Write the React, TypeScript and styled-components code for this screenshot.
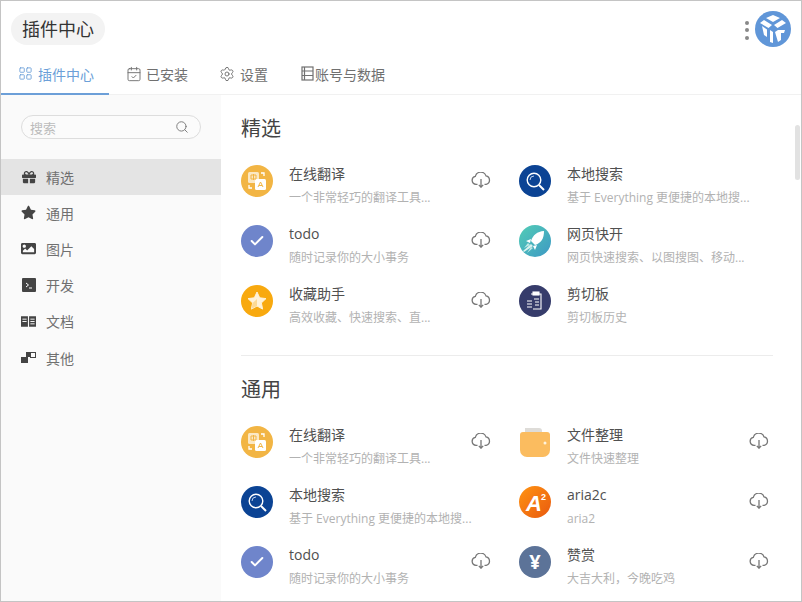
import { ReactNode } from "react";
import styled, { createGlobalStyle } from "styled-components";
import { CalendarCheck, Check, LayoutGrid, Search, Settings } from "lucide-react";
import { FaGift, FaImage, FaStar } from "react-icons/fa";

const GlobalStyle = createGlobalStyle`
  html, body {
    margin: 0;
    padding: 0;
    background: #fff;
    font-family: "Open Sans", "Noto Sans CJK SC", sans-serif;
    overflow: hidden;
  }
  * { box-sizing: border-box; }
`;

const Window = styled.div`
  width: 802px;
  height: 602px;
  border: 1px solid #c4c4c4;
  display: flex;
  flex-direction: column;
  overflow: hidden;
  background: #fff;
`;

const TitleBar = styled.header`
  height: 54px;
  flex: none;
  display: flex;
  align-items: flex-start;
  justify-content: space-between;
  padding: 12px 10px 0 10px;
`;

const TitlePill = styled.div`
  height: 32px;
  width: 94px;
  border-radius: 16px;
  background: #f3f3f3;
  color: #333;
  font-size: 18px;
  line-height: 32px;
  text-align: center;
`;

const TitleActions = styled.div`
  display: flex;
  align-items: center;
  margin-top: -2px;
`;

const MenuDots = styled.div`
  display: flex;
  flex-direction: column;
  gap: 3.5px;
  margin: 2px 6px 0 0;
`;

const MenuDot = styled.span`
  width: 4px;
  height: 4px;
  border-radius: 50%;
  background: #888;
`;

const Tabs = styled.nav`
  height: 40px;
  flex: none;
  display: flex;
  border-bottom: 1px solid #f1f1f1;
`;

const Tab = styled.div<{ $active?: boolean; $width: number; $inset: number; $gap: number }>`
  width: ${(p) => p.$width}px;
  height: 40px;
  display: flex;
  align-items: center;
  gap: ${(p) => p.$gap}px;
  padding: 0 0 1px ${(p) => p.$inset}px;
  font-size: 14px;
  color: ${(p) => (p.$active ? "#6c9fd8" : "#707070")};
  border-bottom: 2px solid ${(p) => (p.$active ? "#6c9fd8" : "transparent")};
`;

const Body = styled.div`
  flex: 1;
  min-height: 0;
  display: flex;
`;

const Sidebar = styled.aside`
  width: 220px;
  flex: none;
  background: #fafafa;
  padding-top: 20px;
`;

const SearchBox = styled.div`
  width: 180px;
  height: 24px;
  margin: 0 0 20px 20px;
  padding: 0 11px 0 8px;
  border: 1px solid #ddd;
  border-radius: 12px;
  display: flex;
  align-items: center;
  justify-content: space-between;
  font-size: 13px;
  color: #bbb;
  background: #fbfbfb;

  svg {
    color: #777;
  }
`;

const NavItem = styled.div<{ $active?: boolean }>`
  height: 36.2px;
  display: flex;
  align-items: center;
  gap: 10px;
  padding: 0 0 1px 20px;
  font-size: 14px;
  color: #707070;
  background: ${(p) => (p.$active ? "#e4e4e4" : "transparent")};
`;

const NavIcon = styled.span`
  width: 15px;
  height: 15px;
  display: flex;
  align-items: center;
  justify-content: center;
  color: #444;
`;

const Main = styled.main`
  position: relative;
  flex: 1;
  min-width: 0;
  padding: 0 28px 0 20px;
  overflow: hidden;
`;

const ScrollThumb = styled.div`
  position: absolute;
  top: 30px;
  right: 1px;
  width: 5px;
  height: 55px;
  border-radius: 3px;
  background: #e2e2e2;
`;

const SectionTitle = styled.h2`
  margin: 0;
  height: 56px;
  padding-top: 19px;
  font-size: 20px;
  line-height: 30px;
  font-weight: 400;
  color: #444;
`;

const Divider = styled.hr`
  margin: 24px 0 0;
  border: none;
  border-top: 1px solid #ececec;
`;

const PluginGrid = styled.div`
  display: grid;
  grid-template-columns: 278px 253px;
  grid-auto-rows: 60px;
`;

const PluginRow = styled.div`
  display: flex;
  align-items: center;
  height: 60px;
`;

const PluginBadge = styled.div<{ $bg: string }>`
  width: 32px;
  height: 32px;
  flex: none;
  border-radius: 50%;
  background: ${(p) => p.$bg};
  display: flex;
  align-items: center;
  justify-content: center;
  color: #fff;
`;

const PluginText = styled.div`
  width: 182px;
  margin: 8px 0 0 16px;
  flex: none;
  display: flex;
  flex-direction: column;
  gap: 5px;
`;

const PluginName = styled.div`
  font-size: 14px;
  line-height: 20px;
  color: #505050;
`;

const PluginDesc = styled.div`
  font-size: 12px;
  line-height: 18px;
  color: #b2b2b2;
  white-space: nowrap;
`;

const InstallButton = styled.div`
  width: 20px;
  height: 16px;
  margin-top: -3px;
  color: #777;
  display: flex;
`;

const CloudIcon = () => (
  <svg width="20" height="16" viewBox="0 0 20 16" fill="none" stroke="currentColor" strokeWidth="1.300">
    <path d="M6.500 12.300H5a4 4 0 0 1-.7-7.900A5.600 5.600 0 0 1 15 3.900a4.300 4.300 0 0 1 .2 8.400h-1.700" />
    <path d="M10 7v8M7.800 12.900 10 15.200l2.200-2.300" />
  </svg>
);

// Ruled sheet used on the accounts tab
const LedgerIcon = () => (
  <svg width="13" height="15" viewBox="0 0 13 15" fill="none" stroke="currentColor" strokeWidth="1.200">
    <rect x="1" y="1" width="11" height="13" />
    <path d="M1 5h11M1 9.500h11M3.500 1v13" />
  </svg>
);

const TerminalIcon = () => (
  <svg width="14" height="14" viewBox="0 0 14 14">
    <rect width="14" height="14" rx="1" fill="currentColor" />
    <path d="M4 5l2.500 2L4 9M7 10h3" stroke="#fff" strokeWidth="1" fill="none" />
  </svg>
);

const BookIcon = () => (
  <svg width="16" height="13" viewBox="0 0 16 13">
    <path d="M0 1h7.400v11H0zM8.600 1H16v11H8.600z" fill="currentColor" />
    <path d="M1.500 4h4.500M1.500 6.500h4.500M10 4h4.500M10 6.500h4.500M10 9h4.500" stroke="#fff" strokeWidth="1" />
  </svg>
);

const BlocksIcon = () => (
  <svg width="15" height="13" viewBox="0 0 15 13">
    <rect x="0" y="6" width="7" height="6" fill="currentColor" />
    <rect x="5" y="1" width="5" height="5" fill="currentColor" />
    <rect x="9.500" y="1.500" width="5" height="5" fill="#fafafa" stroke="currentColor" />
  </svg>
);

const AppLogo = () => (
  <svg width="36" height="36" viewBox="0 0 36 36">
    <circle cx="18" cy="18" r="18" fill="#6096d8" />
    <path d="M5 12l4-3 8 5-3.500 3zM31 12l-4-3-8 5 3.500 3zM11 7l7-3 7 3-7 4z" fill="#fff" />
    <path d="M7 15l5 3.500V26l-3-2zM15 19l3 2v11l-3-1zM20 21l3-2h7l-1 3h-3v7l-3 2z" fill="#fff" />
  </svg>
);

const TranslateArt = () => (
  <svg width="20" height="20" viewBox="0 0 20 20">
    <rect x="1" y="1" width="11" height="11" rx="1.500" fill="#fbe8c4" />
    <rect x="8" y="8" width="11" height="11" rx="1.500" fill="#fff" />
    <path d="M4 4h5v4H4zM6.500 3v6" stroke="#f2b544" strokeWidth="1" fill="none" />
    <path d="M11 16l2.500-5 2.500 5M12 14.500h3" stroke="#f2b544" strokeWidth="1" fill="none" />
    <path d="M14 2l3 0 0 3M2 14l0 3 3 0" stroke="#fff" strokeWidth="1.300" fill="none" />
  </svg>
);

const LensArt = () => (
  <svg width="22" height="22" viewBox="0 0 22 22" fill="none">
    <circle cx="10" cy="10" r="6.800" stroke="#fff" strokeWidth="1.400" />
    <path d="M15 15l5 5" stroke="#fff" strokeWidth="2" />
    <path d="M6 10a4 4 0 0 1 4-4" stroke="#bcd0ec" strokeWidth="1" />
  </svg>
);

const RocketArt = () => (
  <svg width="32" height="32" viewBox="0 0 32 32">
    <path d="M25 6c-7 .5-11 4-13 10l4 4c6-2 9-6 9-14z" fill="#fff" />
    <path d="M12 14l-5 2 4 2zM18 20l-2 5-2-4z" fill="#fff" />
    <path d="M12 19l2 2-9 6-1-1z" fill="#d9f2ef" />
    <path d="M9 18l2 2-6 3zM14 23l-2-1-4 6z" fill="#bfe9e4" />
  </svg>
);

const ClipboardArt = () => (
  <svg width="20" height="22" viewBox="0 0 20 22" fill="none" stroke="#fff" strokeWidth="1.100">
    <path d="M6 4h10v15H8" />
    <rect x="8" y="2" width="6" height="3" fill="#fff" />
    <path d="M9 9h5M10 12h4M10 15h4" />
    <path d="M2 11h5M2 14h5M2 17h5" />
  </svg>
);

const WalletArt = () => (
  <svg width="32" height="32" viewBox="0 0 32 32">
    <path d="M6 2h14a3 3 0 0 1 3 3v2H6z" fill="#dedcd8" />
    <path d="M1 9a3 3 0 0 1 3-3h24a3 3 0 0 1 3 3v15a7 7 0 0 1-7 7H8a7 7 0 0 1-7-7z" fill="#fbbc5f" />
    <circle cx="26" cy="17" r="1.500" fill="#fff3dc" />
  </svg>
);

const AriaArt = () => (
  <svg width="32" height="32" viewBox="0 0 32 32">
    <defs>
      <linearGradient id="ariaFill" x1="0" y1="0" x2="1" y2="1">
        <stop offset="0" stopColor="#ff9412" />
        <stop offset="1" stopColor="#e9590f" />
      </linearGradient>
    </defs>
    <circle cx="16" cy="16" r="16" fill="url(#ariaFill)" />
    <text x="7" y="25" fontSize="22" fontWeight="700" fontStyle="italic" fill="#fff" fontFamily="Liberation Sans, sans-serif">A</text>
    <text x="22" y="14" fontSize="9" fontWeight="700" fill="#fff" fontFamily="Liberation Sans, sans-serif">2</text>
  </svg>
);

const StarArt = () => (
  <svg width="22" height="22" viewBox="0 0 22 22">
    <path
      d="M11 2l2.700 5.800 6.300.8-4.600 4.300 1.200 6.200L11 16l-5.600 3.100 1.200-6.200L2 8.600l6.300-.8z"
      fill="#fff2d8"
      stroke="#fff2d8"
      strokeLinejoin="round"
    />
    <path d="M5.400 19.100 11 16V9l-4.400 3.900z" fill="#fcd995" />
  </svg>
);

const YenArt = styled.span`
  color: #fff;
  font-size: 20px;
  font-weight: 700;
  line-height: 1;
`;

const tabs = [
  { label: "插件中心", width: 108, inset: 17, gap: 5, icon: <LayoutGrid size={15} strokeWidth={1.400} />, active: true },
  { label: "已安装", width: 97, inset: 17, gap: 4, icon: <CalendarCheck size={16} strokeWidth={1.400} /> },
  { label: "设置", width: 80, inset: 13, gap: 5, icon: <Settings size={16} strokeWidth={1.400} /> },
  { label: "账号与数据", width: 120, inset: 15, gap: 1, icon: <LedgerIcon /> },
];

const navItems: { label: string; icon: ReactNode; active?: boolean }[] = [
  { label: "精选", icon: <FaGift size={14} />, active: true },
  { label: "通用", icon: <FaStar size={15} /> },
  { label: "图片", icon: <FaImage size={15} /> },
  { label: "开发", icon: <TerminalIcon /> },
  { label: "文档", icon: <BookIcon /> },
  { label: "其他", icon: <BlocksIcon /> },
];

type Plugin = {
  name: string;
  desc: string;
  bg: string;
  art: ReactNode;
  installable?: boolean;
};

const translate: Plugin = {
  name: "在线翻译",
  desc: "一个非常轻巧的翻译工具...",
  bg: "#f2b544",
  art: <TranslateArt />,
  installable: true,
};
const localSearch: Plugin = {
  name: "本地搜索",
  desc: "基于 Everything 更便捷的本地搜...",
  bg: "#0b4394",
  art: <LensArt />,
};
const todo: Plugin = {
  name: "todo",
  desc: "随时记录你的大小事务",
  bg: "#6f85cb",
  art: <Check size={16} strokeWidth={3} />,
  installable: true,
};

const featured: Plugin[] = [
  translate,
  localSearch,
  todo,
  {
    name: "网页快开",
    desc: "网页快速搜索、以图搜图、移动...",
    bg: "linear-gradient(135deg, #53cdb6, #3d98c4)",
    art: <RocketArt />,
  },
  {
    name: "收藏助手",
    desc: "高效收藏、快速搜索、直...",
    bg: "#f8a90f",
    art: <StarArt />,
    installable: true,
  },
  { name: "剪切板", desc: "剪切板历史", bg: "#363c6b", art: <ClipboardArt /> },
];

const general: Plugin[] = [
  translate,
  { name: "文件整理", desc: "文件快速整理", bg: "transparent", art: <WalletArt />, installable: true },
  localSearch,
  { name: "aria2c", desc: "aria2", bg: "transparent", art: <AriaArt />, installable: true },
  todo,
  { name: "赞赏", desc: "大吉大利，今晚吃鸡", bg: "#5c7398", art: <YenArt>¥</YenArt>, installable: true },
];

const PluginCard = ({ plugin }: { plugin: Plugin }) => (
  <PluginRow>
    <PluginBadge $bg={plugin.bg}>{plugin.art}</PluginBadge>
    <PluginText>
      <PluginName>{plugin.name}</PluginName>
      <PluginDesc>{plugin.desc}</PluginDesc>
    </PluginText>
    {plugin.installable && (
      <InstallButton>
        <CloudIcon />
      </InstallButton>
    )}
  </PluginRow>
);

function App() {
  return (
    <>
      <GlobalStyle />
      <Window>
        <TitleBar>
          <TitlePill>插件中心</TitlePill>
          <TitleActions>
            <MenuDots>
              <MenuDot />
              <MenuDot />
              <MenuDot />
            </MenuDots>
            <AppLogo />
          </TitleActions>
        </TitleBar>
        <Tabs>
          {tabs.map((tab) => (
            <Tab key={tab.label} $active={tab.active} $width={tab.width} $inset={tab.inset} $gap={tab.gap}>
              {tab.icon}
              {tab.label}
            </Tab>
          ))}
        </Tabs>
        <Body>
          <Sidebar>
            <SearchBox>
              搜索
              <Search size={14} strokeWidth={1.600} />
            </SearchBox>
            {navItems.map((item) => (
              <NavItem key={item.label} $active={item.active}>
                <NavIcon>{item.icon}</NavIcon>
                {item.label}
              </NavItem>
            ))}
          </Sidebar>
          <Main>
            <section>
              <SectionTitle>精选</SectionTitle>
              <PluginGrid>
                {featured.map((plugin) => (
                  <PluginCard key={plugin.name} plugin={plugin} />
                ))}
              </PluginGrid>
            </section>
            <Divider />
            <section>
              <SectionTitle>通用</SectionTitle>
              <PluginGrid>
                {general.map((plugin) => (
                  <PluginCard key={plugin.name} plugin={plugin} />
                ))}
              </PluginGrid>
            </section>
            <ScrollThumb />
          </Main>
        </Body>
      </Window>
    </>
  );
}

export default App;
